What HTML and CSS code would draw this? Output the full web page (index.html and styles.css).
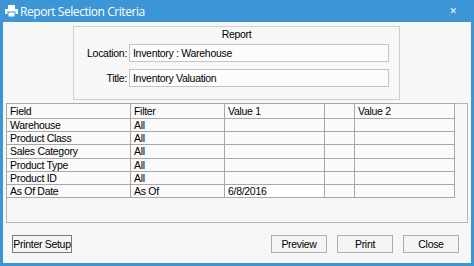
FILE: index.html
```html
<!DOCTYPE html>
<html lang="en">
<head>
  <meta charset="UTF-8" />
  <title>Report Selection Criteria</title>
  <link rel="stylesheet" href="styles.css">
</head>
<body>
  <div class="window">
    <div class="titlebar">
      <svg class="app-icon" width="13" height="12" viewBox="0 0 13 12">
        <rect x="3" y="0" width="7" height="4" fill="#fff"/>
        <rect x="0" y="4" width="13" height="5" fill="#fff"/>
        <rect x="3" y="7" width="7" height="5" fill="#fff" stroke="#3c96d6" stroke-width="1"/>
      </svg>
      <span class="title">Report Selection Criteria</span>
      <span class="close-x">&#x2715;</span>
    </div>

    <div class="client">
      <fieldset class="report-box">
        <div class="box-title">Report</div>
        <div class="field-row">
          <label>Location:</label>
          <div class="text-input">Inventory : Warehouse</div>
        </div>
        <div class="field-row">
          <label>Title:</label>
          <div class="text-input">Inventory Valuation</div>
        </div>
      </fieldset>

      <div class="grid">
        <table>
          <thead>
            <tr>
              <th class="c-field">Field</th>
              <th class="c-filter">Filter</th>
              <th class="c-val1">Value 1</th>
              <th class="c-gap"></th>
              <th class="c-val2">Value 2</th>
            </tr>
          </thead>
          <tbody>
            <tr><td>Warehouse</td><td>All</td><td></td><td></td><td></td></tr>
            <tr><td>Product Class</td><td>All</td><td></td><td></td><td></td></tr>
            <tr><td>Sales Category</td><td>All</td><td></td><td></td><td></td></tr>
            <tr><td>Product Type</td><td>All</td><td></td><td></td><td></td></tr>
            <tr><td>Product ID</td><td>All</td><td></td><td></td><td></td></tr>
            <tr><td>As Of Date</td><td>As Of</td><td class="editable">6/8/2016</td><td></td><td></td></tr>
          </tbody>
        </table>
      </div>

      <div class="buttons">
        <button class="btn focused">Printer Setup</button>
        <div class="spacer"></div>
        <button class="btn">Preview</button>
        <button class="btn">Print</button>
        <button class="btn">Close</button>
      </div>
    </div>
  </div>
</body>
</html>
```

FILE: styles.css
```css
body {
  margin: 0;
  font-family: 'Liberation Sans', Arial, sans-serif;
  font-size: 10.5px;
  letter-spacing: -0.3px;
  color: #000;
  background: #3c96d6;
}

.window {
  width: 474px;
  height: 266px;
  box-sizing: border-box;
  background: #3c96d6;
  padding: 0 3px 3px 3px;
  display: flex;
  flex-direction: column;
}

.titlebar {
  height: 22px;
  display: flex;
  align-items: center;
  color: #fff;
}
.app-icon {
  margin-left: 2px;
  margin-right: 2px;
}
.title {
  font-family: 'Open Sans', sans-serif;
  font-size: 12px;
  letter-spacing: -0.45px;
}
.close-x {
  margin-left: auto;
  margin-right: 14px;
  font-size: 9px;
  font-weight: bold;
  letter-spacing: 0;
  font-family: 'DejaVu Sans', sans-serif;
}

.client {
  flex: 1;
  background: #f7f7f7;
  display: flex;
  flex-direction: column;
}

/* Report group */
.report-box {
  margin: 4px 0 0 70px;
  padding: 0;
  width: 327px;
  height: 74px;
  box-sizing: border-box;
  border: 1px solid #cfcfcf;
}
.box-title {
  text-align: center;
  margin-top: 1px;
  height: 14px;
}
.field-row {
  display: flex;
  align-items: center;
  margin-top: 2px;
}
.field-row + .field-row {
  margin-top: 7px;
}
.field-row label {
  width: 53px;
  text-align: right;
  margin-right: 2px;
}
.text-input {
  width: 260px;
  height: 18px;
  box-sizing: border-box;
  border: 1px solid #c4c4c4;
  background: #fcfcfc;
  padding: 2px 0 0 3px;
}

/* Selection grid */
.grid {
  margin: 3px 3px 0 3px;
  height: 120px;
  box-sizing: border-box;
  border: 1px solid #b4b4b4;
  background: #f7f7f7;
}
table {
  border-collapse: collapse;
  table-layout: fixed;
  width: 448px;
  margin-top: -1px;
  margin-left: -1px;
}
th, td {
  box-sizing: border-box;
  border: 1px solid #a8a8a8;
  height: 13.2px;
  padding: 0 0 0 3px;
  font-weight: normal;
  text-align: left;
  white-space: nowrap;
  overflow: hidden;
  background: #fafafa;
  line-height: 12px;
}
th {
  height: 15px;
}
.c-field { width: 124px; }
.c-filter { width: 94px; }
.c-val1 { width: 100px; }
.c-gap { width: 30px; }
.c-val2 { width: 100px; }
td.editable {
  background: #fff;
}

/* Buttons */
.buttons {
  display: flex;
  margin: 12px 0 0 9px;
  padding-right: 12px;
  gap: 10px;
}
.spacer {
  flex: 1;
}
.btn {
  font-family: 'Liberation Sans', Arial, sans-serif;
  font-size: 10.5px;
  letter-spacing: -0.3px;
  white-space: nowrap;
  height: 18px;
  width: 56px;
  padding: 0;
  border: 1px solid #adadad;
  background: #f4f4f4;
  color: #000;
}
.btn.focused {
  width: 60px;
  border-color: #7a7a7a;
}
```
